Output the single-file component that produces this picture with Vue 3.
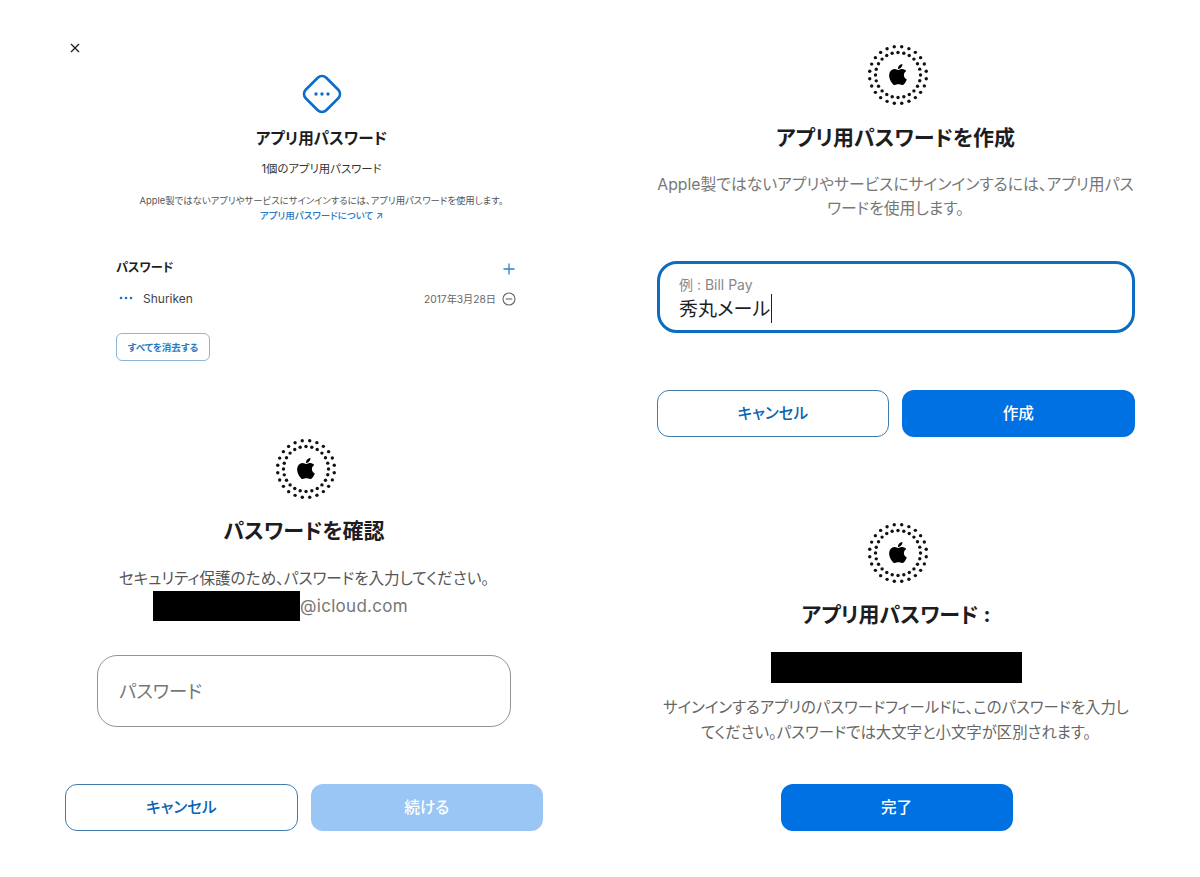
<script setup>
const rings = []
const count = 24
for (let i = 0; i < count; i++) {
  const a = (i / count) * Math.PI * 2 + 0.13
  rings.push({ x: 32 + Math.cos(a) * 28.5, y: 32 + Math.sin(a) * 28.5 })
  const b = a + Math.PI / count
  rings.push({ x: 32 + Math.cos(b) * 22.5, y: 32 + Math.sin(b) * 22.5 })
}
const applePath = 'M17.05 20.28c-.98.95-2.05.8-3.08.35-1.09-.46-2.09-.48-3.24 0-1.44.62-2.2.44-3.06-.35C2.79 15.25 3.51 7.59 9.05 7.31c1.35.07 2.29.74 3.08.8 1.18-.24 2.31-.93 3.57-.84 1.51.12 2.65.72 3.4 1.8-3.12 1.87-2.38 5.98.48 7.13-.57 1.5-1.31 2.99-2.54 4.09zM12.03 7.25c-.15-2.23 1.66-4.07 3.74-4.25.29 2.58-2.34 4.5-3.74 4.25z'
</script>

<template>
  <div class="page">
    <div class="col col-left">
      <button class="close" aria-label="閉じる">
        <svg width="10" height="10" viewBox="0 0 10 10"><path d="M1 1l8 8M9 1L1 9" stroke="#1d1d1f" stroke-width="1.3" fill="none" /></svg>
      </button>

      <section class="manage">
        <svg class="diamond" width="40" height="40" viewBox="0 0 40 40">
          <rect x="5.5" y="5.5" width="29" height="29" rx="6" transform="rotate(45 20 20)" fill="none" stroke="#0b6ccb" stroke-width="2.6" />
          <circle cx="14" cy="20" r="1.7" fill="#0b6ccb" />
          <circle cx="20" cy="20" r="1.7" fill="#0b6ccb" />
          <circle cx="26" cy="20" r="1.7" fill="#0b6ccb" />
        </svg>
        <h1 class="manage-title">アプリ用パスワード</h1>
        <p class="manage-count">1個のアプリ用パスワード</p>
        <p class="manage-desc">Apple製ではないアプリやサービスにサインインするには、アプリ用パスワードを使用します。</p>
        <a class="manage-link">アプリ用パスワードについて ↗</a>

        <div class="list">
          <div class="list-head">
            <span>パスワード</span>
            <svg width="12" height="12" viewBox="0 0 12 12"><path d="M6 .5v11M.5 6h11" stroke="#2f7fc9" stroke-width="1.3" /></svg>
          </div>
          <div class="list-row">
            <svg class="row-dots" width="14" height="4" viewBox="0 0 14 4">
              <circle cx="2" cy="2" r="1.3" fill="#1f6fc0" />
              <circle cx="7" cy="2" r="1.3" fill="#1f6fc0" />
              <circle cx="12" cy="2" r="1.3" fill="#1f6fc0" />
            </svg>
            <span class="row-name">Shuriken</span>
            <span class="row-date">2017年3月28日</span>
            <svg class="row-minus" width="14" height="14" viewBox="0 0 14 14">
              <circle cx="7" cy="7" r="6" fill="none" stroke="#666" stroke-width="1.1" />
              <path d="M3.8 7h6.4" stroke="#666" stroke-width="1.1" />
            </svg>
          </div>
          <button class="clear-btn">すべてを消去する</button>
        </div>
      </section>

      <section class="dialog confirm">
        <svg class="ring" width="64" height="64" viewBox="0 0 64 64">
          <circle v-for="(d, i) in rings" :key="i" :cx="d.x" :cy="d.y" r="1.7" fill="#111" />
          <svg x="18" y="17.5" width="28" height="28" viewBox="0 0 24 24"><path :d="applePath" fill="#000" /></svg>
        </svg>
        <h2 class="dialog-title">パスワードを確認</h2>
        <p class="confirm-desc">セキュリティ保護のため、パスワードを入力してください。</p>
        <div class="email"><span class="redact redact-email"></span><span>@icloud.com</span></div>
        <input class="pw-input" type="password" placeholder="パスワード" />
        <div class="actions">
          <button class="btn btn-outline">キャンセル</button>
          <button class="btn btn-disabled">続ける</button>
        </div>
      </section>
    </div>

    <div class="col col-right">
      <section class="dialog create">
        <svg class="ring" width="64" height="64" viewBox="0 0 64 64">
          <circle v-for="(d, i) in rings" :key="i" :cx="d.x" :cy="d.y" r="1.7" fill="#111" />
          <svg x="18" y="17.5" width="28" height="28" viewBox="0 0 24 24"><path :d="applePath" fill="#000" /></svg>
        </svg>
        <h2 class="dialog-title">アプリ用パスワードを作成</h2>
        <p class="create-desc">Apple製ではないアプリやサービスにサインインするには、アプリ用パス<br />ワードを使用します。</p>
        <div class="name-field">
          <div class="name-label">例 : Bill Pay</div>
          <div class="name-value">秀丸メール<span class="caret"></span></div>
        </div>
        <div class="actions create-actions">
          <button class="btn btn-outline">キャンセル</button>
          <button class="btn btn-primary">作成</button>
        </div>
      </section>

      <section class="dialog result">
        <svg class="ring" width="64" height="64" viewBox="0 0 64 64">
          <circle v-for="(d, i) in rings" :key="i" :cx="d.x" :cy="d.y" r="1.7" fill="#111" />
          <svg x="18" y="17.5" width="28" height="28" viewBox="0 0 24 24"><path :d="applePath" fill="#000" /></svg>
        </svg>
        <h2 class="dialog-title">アプリ用パスワード :</h2>
        <div class="redact redact-pw"></div>
        <p class="result-desc">サインインするアプリのパスワードフィールドに、このパスワードを入力し<br />てください。パスワードでは大文字と小文字が区別されます。</p>
        <button class="btn btn-primary btn-done">完了</button>
      </section>
    </div>
  </div>
</template>

<style>
html, body {
  background: #fff;
}
</style>

<style scoped>
* {
  box-sizing: border-box;
  font-family: Inter, 'Noto Sans CJK JP', sans-serif;
  font-feature-settings: 'palt';
}

p, h1, h2 {
  margin: 0;
}

.page {
  display: grid;
  grid-template-columns: 600px 600px;
  width: 1200px;
  height: 877px;
  overflow: hidden;
  background: #fff;
  color: #1d1d1f;
}

.col-left {
  padding-left: 65px;
}

.col-right {
  padding-left: 56.5px;
}

.close {
  display: block;
  width: 10px;
  height: 10px;
  margin: 43px 0 0 5px;
  padding: 0;
  border: none;
  background: none;
  line-height: 0;
}

/* Panel de arriba a la izquierda */
.manage {
  display: flex;
  flex-direction: column;
  align-items: center;
  width: 411px;
  margin-left: 51px;
  text-align: center;
}

.diamond {
  margin-top: 21px;
}

.manage-title {
  margin-top: 15px;
  font-size: 15.6px;
  line-height: 20px;
  font-weight: 700;
}

.manage-count {
  margin-top: 12px;
  font-size: 11.4px;
  line-height: 16px;
  color: #333;
}

.manage-desc {
  margin-top: 16px;
  font-size: 9.4px;
  line-height: 15px;
  color: #555;
  white-space: nowrap;
}

.manage-link {
  font-size: 9.5px;
  line-height: 15px;
  font-weight: 500;
  color: #2a78bf;
}

.list {
  width: 401px;
  margin-top: 35px;
  margin-right: 10px;
  text-align: left;
}

.list-head {
  display: flex;
  align-items: center;
  justify-content: space-between;
  padding-right: 2px;
  font-size: 12.2px;
  line-height: 20px;
  font-weight: 700;
}

.list-head svg {
  margin-top: 2px;
}

.list-row {
  display: flex;
  align-items: center;
  gap: 6px;
  height: 20px;
  margin-top: 10px;
  padding-right: 1px;
  padding-left: 3px;
}

.row-name {
  margin-left: 4px;
  font-size: 12px;
  color: #444;
}

.row-date {
  margin-left: auto;
  font-size: 10.2px;
  color: #666;
}

.row-minus {
  margin-top: 2px;
}

.clear-btn {
  display: block;
  width: 94px;
  height: 28px;
  margin-top: 25px;
  padding: 0;
  border: 1px solid #8fb5d3;
  border-radius: 6px;
  background: #fff;
  font-size: 9.5px;
  font-weight: 600;
  color: #2a78bf;
}

/* Diálogos grandes */
.dialog {
  display: flex;
  flex-direction: column;
  align-items: center;
  width: 478px;
  text-align: center;
}

.confirm .ring {
  margin-top: 76px;
  margin-left: 3px;
}

.ring {
  display: block;
}

.dialog-title {
  margin-top: 15px;
  font-size: 21px;
  line-height: 30px;
  font-weight: 700;
  color: #1d1d1f;
}

.confirm-desc {
  margin-top: 21px;
  font-size: 15.6px;
  line-height: 24px;
  color: #555;
  white-space: nowrap;
}

.email {
  display: flex;
  align-items: center;
  align-self: flex-start;
  height: 30px;
  margin-left: 88px;
  font-size: 17px;
  letter-spacing: 0.3px;
  color: #777;
}

.redact {
  display: block;
  background: #000;
}

.redact-email {
  width: 147px;
  height: 30px;
}

.pw-input {
  width: 414px;
  height: 72px;
  margin-top: 34px;
  padding: 0 21px;
  border: 1px solid #949494;
  border-radius: 20px;
  outline: none;
  background: #fff;
  font-size: 18.4px;
  color: #1d1d1f;
}

.pw-input::placeholder {
  color: #777;
  opacity: 1;
}

.actions {
  display: flex;
  gap: 13px;
  width: 100%;
  margin-top: 57px;
}

.btn {
  flex: 1;
  height: 47px;
  padding: 0 0 3px;
  border: 1px solid transparent;
  border-radius: 12px;
  font-size: 15.6px;
  font-weight: 500;
}

.btn-outline {
  border-color: #3f7cab;
  background: #fff;
  color: #0b63b3;
}

.btn-primary {
  background: #0071e3;
  color: #fff;
}

.btn-disabled {
  background: #99c6f4;
  color: #fff;
}

.create .ring {
  margin-top: 43px;
  margin-left: 4px;
}

.create .dialog-title {
  margin-top: 16px;
}

.create-desc {
  margin-top: 20px;
  font-size: 15.8px;
  line-height: 24px;
  color: #777;
  white-space: nowrap;
}

.name-field {
  width: 100%;
  height: 72px;
  margin-top: 40px;
  padding: 11px 19.5px 0;
  border: 3px solid #0b6cc0;
  border-radius: 20px;
  text-align: left;
}

.name-label {
  font-size: 14px;
  line-height: 20px;
  color: #888;
}

.name-value {
  display: flex;
  align-items: center;
  margin-top: 2px;
  font-size: 19px;
  line-height: 26px;
  color: #1d1d1f;
}

.caret {
  width: 1px;
  height: 29px;
  margin-top: -3px;
  margin-left: 1px;
  background: #222;
}

.create-actions {
  margin-top: 57px;
}

.result {
  margin-left: 0.5px;
}

.result .ring {
  margin-top: 84px;
  margin-left: 3px;
}

.redact-pw {
  width: 251px;
  height: 31px;
  margin-top: 22px;
}

.result-desc {
  margin-top: 12px;
  font-size: 15.4px;
  line-height: 25px;
  color: #666;
  white-space: nowrap;
}

.btn-done {
  flex: none;
  width: 232px;
  margin-top: 39px;
  margin-left: 1px;
}
</style>
